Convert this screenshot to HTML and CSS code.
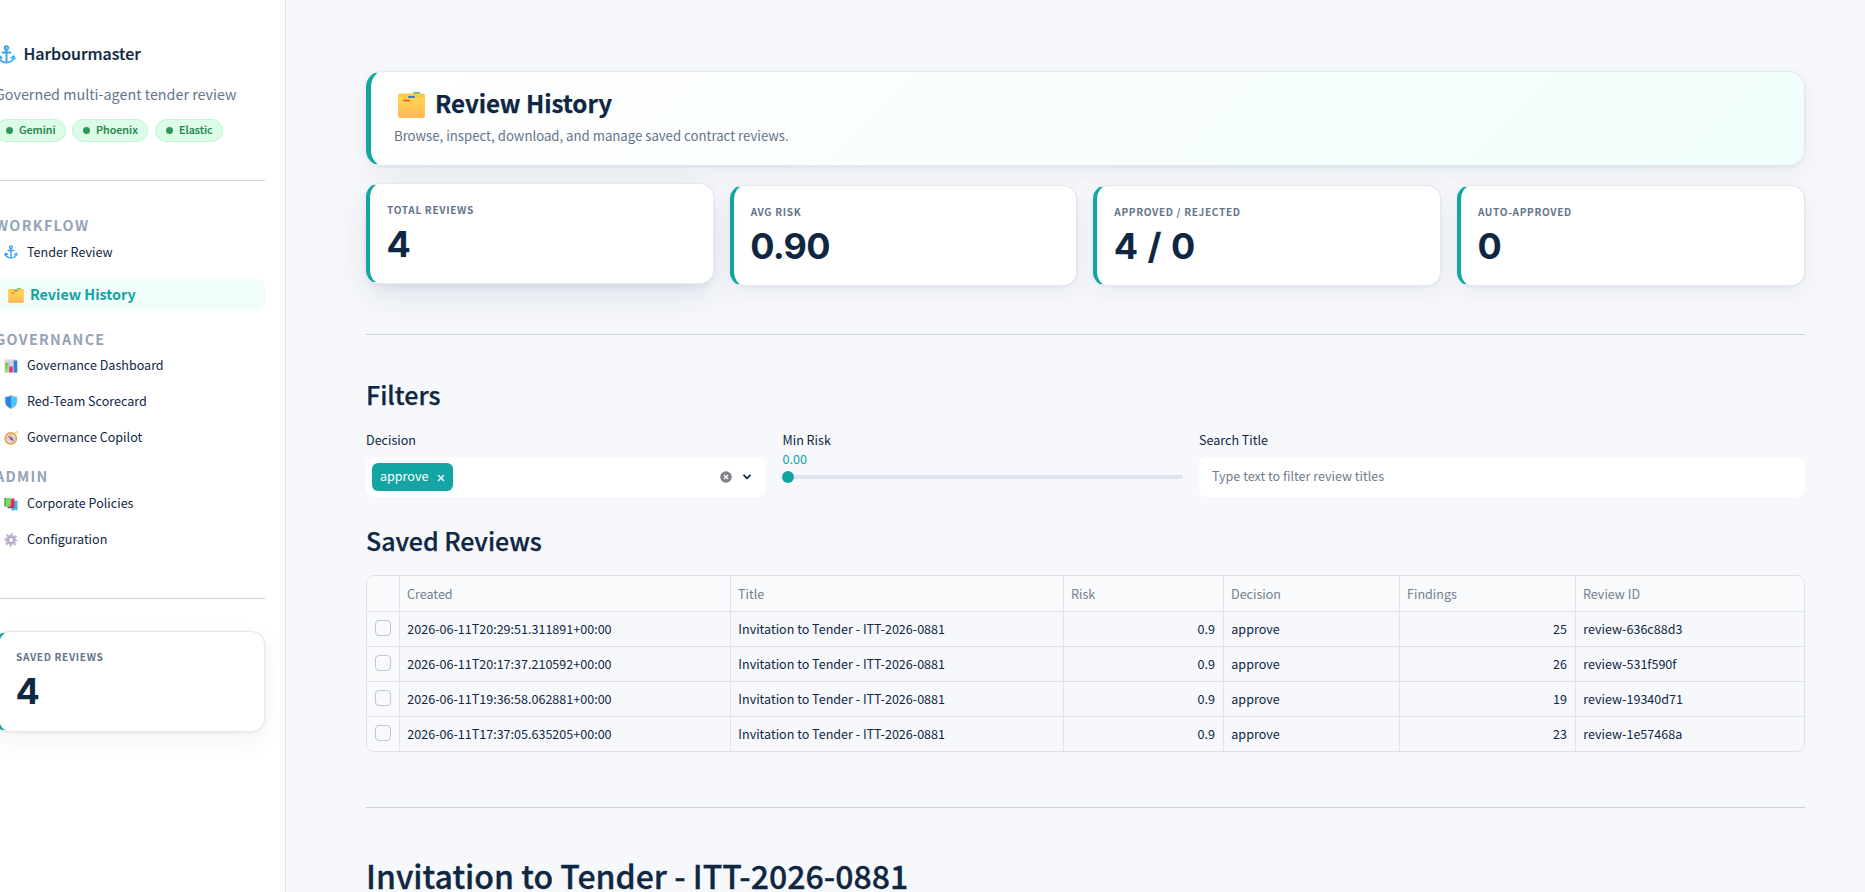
FILE: index.html
```html
<!DOCTYPE html>
<html lang="en">
<head>
<meta charset="utf-8">
<title>Harbourmaster</title>
<link rel="stylesheet" href="styles.css">
</head>
<body>
<svg class="defs" width="0" height="0" aria-hidden="true">
  <defs>
    <linearGradient id="gf" x1="0" y1="0" x2="0" y2="1"><stop offset="0" stop-color="#ffd84f"/><stop offset="1" stop-color="#ffb75c"/></linearGradient>
    <linearGradient id="ga" x1="0" y1="0" x2="1" y2="1"><stop offset="0" stop-color="#2f8fe0"/><stop offset="1" stop-color="#55bdf8"/></linearGradient>
    <linearGradient id="gg" x1="0" y1="0" x2="0" y2="1"><stop offset="0" stop-color="#5dc95a"/><stop offset="1" stop-color="#a4ea72"/></linearGradient>
  </defs>
  <symbol id="anchor" viewBox="0 0 32 32">
    <g fill="none" stroke="url(#ga)" stroke-width="3.4" stroke-linecap="round" stroke-linejoin="round">
      <circle cx="16" cy="5" r="3"/><path d="M9.500 12.500h13M16.010 8v21M3.500 21c1 5 6.500 8.500 12.500 8.500S27.500 26 28.500 21"/>
      <path d="M2 23l1.800-4 4 2.500M30 23l-1.800-4-4 2.500"/>
    </g>
  </symbol>
  <symbol id="folder" viewBox="0 0 27 26">
    <rect x="15" y="0" width="7" height="3" rx="1" fill="#40c983"/>
    <path d="M0 3.600a2 2 0 0 1 2-2h23a2 2 0 0 1 2 2V12H0z" fill="#fdc94a"/>
    <rect x="10" y="4" width="7" height="1.900" rx=".8" fill="#397fcf"/>
    <path d="M0 5.600h9l1.500 .6H27V24a2 2 0 0 1-2 2H2a2 2 0 0 1-2-2z" fill="url(#gf)"/>
    <rect x="5" y="7.800" width="7" height="1.700" rx=".8" fill="#f0473f"/>
    <path d="M0 9.400h12l1.500-.8H27" fill="none" stroke="#f8c244" stroke-width=".6"/>
  </symbol>
  <symbol id="chart" viewBox="0 0 32 32">
    <rect x="1" y="1" width="30" height="30" rx="1.500" fill="#ddd5e4"/>
    <path d="M1 8.500h30M1 16h30M1 23.500h30M11 1v30M21 1v30" stroke="#c2b7ce" stroke-width="1.200"/>
    <path d="M2.500 9h7.500v22H2.500z" fill="url(#gg)"/><path d="M12.200 17h7.500v14h-7.500z" fill="#e02f70"/><path d="M22.200 3.500H30V31h-7.800z" fill="#2584dc"/>
  </symbol>
  <symbol id="shield" viewBox="0 0 32 32">
    <path d="M16 1c-4 2.500-8 3.500-13 3.500V15c0 8 5 13 13 16z" fill="#2a83e2"/>
    <path d="M16 1c4 2.500 8 3.500 13 3.500V15c0 8-5 13-13 16z" fill="#4fc3f8"/>
    <path d="M16 1c-4 2.500-8 3.500-13 3.500V15c0 8 5 13 13 16 8-3 13-8 13-16V4.500C24 4.500 20 3.500 16 1z" fill="none" stroke="#69a9df" stroke-width="1.500"/>
  </symbol>
  <symbol id="compass" viewBox="0 0 32 32">
    <circle cx="28.500" cy="3.500" r="2.400" fill="none" stroke="#eebd46" stroke-width="1.800"/>
    <circle cx="15.500" cy="17" r="13" fill="#ded5df" stroke="#e7a13d" stroke-width="3.400"/>
    <path d="M8.500 10l10 4.500-4.500 4.500z" fill="#e64063"/><path d="M22.500 24l-8.500-5 4.500-4.500z" fill="#64596c"/>
    <path d="M15.500 6.500v3M15.500 24.500v3M5 17h3M23 17h3" stroke="#a99bb0" stroke-width="1.500"/>
  </symbol>
  <symbol id="books" viewBox="0 0 32 32">
    <path d="M17 10l14-2v22l-14 1z" fill="#41b4ec"/><path d="M15 30l13-2v3H15z" fill="#aee3f6"/>
    <path d="M12 5l12-2v20l-12 2z" fill="#d92d62"/><path d="M8 22.500l14-.5v3.500H8z" fill="#8e4163"/>
    <path d="M1 2h15v17H1z" fill="#83d65b"/><path d="M1 2h3v20H1z" fill="#45a64a"/><path d="M2 19h14v3H2z" fill="#6faf79"/>
  </symbol>
  <symbol id="gear" viewBox="0 0 32 32">
    <circle cx="16" cy="16" r="8.300" fill="none" stroke="#bdb1cd" stroke-width="6"/>
    <circle cx="16" cy="16" r="13" fill="none" stroke="#bdb1cd" stroke-width="4.600" stroke-dasharray="5.100 5.110" stroke-dashoffset="2.550"/>
    <circle cx="16" cy="16" r="6" fill="none" stroke="#9d91b0" stroke-width="1.500"/>
  </symbol>
</svg>
<div class="app">
  <aside class="sidebar">
    <div class="brand"><svg class="brand-icon"><use href="#anchor"/></svg><span>Harbourmaster</span></div>
    <p class="tagline">Governed multi-agent tender review</p>
    <div class="pills">
      <span class="pill gemini"><i></i>Gemini</span>
      <span class="pill phoenix"><i></i>Phoenix</span>
      <span class="pill elastic"><i></i>Elastic</span>
    </div>
    <hr class="rule rule-top">
    <nav>
      <h4 class="group">WORKFLOW</h4>
      <a class="link"><svg><use href="#anchor"/></svg>Tender Review</a>
      <a class="link active"><svg><use href="#folder"/></svg><span>Review History</span></a>
      <h4 class="group governance">GOVERNANCE</h4>
      <a class="link"><svg><use href="#chart"/></svg><span>Governance Dashboard</span></a>
      <a class="link"><svg><use href="#shield"/></svg><span>Red-Team Scorecard</span></a>
      <a class="link"><svg><use href="#compass"/></svg><span>Governance Copilot</span></a>
      <h4 class="group admin">ADMIN</h4>
      <a class="link"><svg><use href="#books"/></svg><span>Corporate Policies</span></a>
      <a class="link"><svg><use href="#gear"/></svg><span>Configuration</span></a>
    </nav>
    <hr class="rule rule-bottom">
    <div class="metric"><div class="metric-label">SAVED REVIEWS</div><div class="metric-value">4</div></div>
  </aside>
  <main class="main">
    <header class="hero">
      <h1 class="hero-title"><svg><use href="#folder"/></svg>Review History</h1>
      <p class="hero-sub">Browse, inspect, download, and manage saved contract reviews.</p>
    </header>
    <section class="metrics">
      <div class="metric raised"><div class="metric-label">TOTAL REVIEWS</div><div class="metric-value">4</div></div>
      <div class="metric"><div class="metric-label">AVG RISK</div><div class="metric-value">0.90</div></div>
      <div class="metric"><div class="metric-label">APPROVED / REJECTED</div><div class="metric-value">4 / 0</div></div>
      <div class="metric"><div class="metric-label">AUTO-APPROVED</div><div class="metric-value">0</div></div>
    </section>
    <hr class="rule rule-metrics">
    <h2 class="heading filters-heading">Filters</h2>
    <section class="filters">
      <div class="field">
        <label class="label">Decision</label>
        <div class="control select">
          <span class="tag">approve<svg viewBox="0 0 8 8"><path d="M1 1l6 6M7 1L1 7"/></svg></span>
          <svg class="clear" viewBox="0 0 12 12"><circle cx="6" cy="6" r="5.800"/><path d="M4 4l4 4M8 4L4 8"/></svg>
          <svg class="chevron" viewBox="0 0 10 8"><path d="M1.500 1.800L5 5.300l3.500-3.500"/></svg>
        </div>
      </div>
      <div class="field">
        <label class="label">Min Risk</label>
        <div class="slider-value">0.00</div>
        <div class="slider"><span class="thumb"></span><span class="track"></span></div>
      </div>
      <div class="field">
        <label class="label">Search Title</label>
        <div class="control search">Type text to filter review titles</div>
      </div>
    </section>
    <h2 class="heading saved-heading">Saved Reviews</h2>
    <section class="table">
      <div class="row head"><span></span><span>Created</span><span>Title</span><span>Risk</span><span>Decision</span><span>Findings</span><span>Review ID</span></div>
      <div class="row"><span class="pick"><i></i></span><span>2026-06-11T20:29:51.311891+00:00</span><span>Invitation to Tender - ITT-2026-0881</span><span class="num">0.9</span><span>approve</span><span class="num">25</span><span>review-636c88d3</span></div>
      <div class="row"><span class="pick"><i></i></span><span>2026-06-11T20:17:37.210592+00:00</span><span>Invitation to Tender - ITT-2026-0881</span><span class="num">0.9</span><span>approve</span><span class="num">26</span><span>review-531f590f</span></div>
      <div class="row"><span class="pick"><i></i></span><span>2026-06-11T19:36:58.062881+00:00</span><span>Invitation to Tender - ITT-2026-0881</span><span class="num">0.9</span><span>approve</span><span class="num">19</span><span>review-19340d71</span></div>
      <div class="row"><span class="pick"><i></i></span><span>2026-06-11T17:37:05.635205+00:00</span><span>Invitation to Tender - ITT-2026-0881</span><span class="num">0.9</span><span>approve</span><span class="num">23</span><span>review-1e57468a</span></div>
    </section>
    <hr class="rule rule-table">
    <h2 class="review-title">Invitation to Tender - ITT-2026-0881</h2>
  </main>
</div>
</body>
</html>
```
FILE: styles.css
```css
* { box-sizing: border-box; margin: 0; padding: 0; }
html, body { height: 100%; overflow: hidden; }
body {
  font-family: "Noto Sans CJK SC", "Noto Sans", sans-serif;
  font-size: 12.55px;
  color: #0f2742;
  background: #f6f8fc;
}
.defs { position: absolute; }
.app { display: flex; height: 892px; overflow: hidden; }
svg { flex: none; }

.rule { border: 0; height: 1px; background: #c9d0d9; }

/* Sidebar */
.sidebar {
  width: 291px;
  margin-left: -5px;
  height: 892px;
  flex: none;
  padding: 42px 20px 0 0;
  background: #fff;
  border-right: 1px solid #dfe5ee;
}
.brand { display: flex; align-items: center; height: 24px; font-size: 16px; line-height: 22px; font-weight: 500; -webkit-text-stroke: .2px; }
.brand-icon { width: 19px; height: 19px; margin: 0 7.500px 0 2px; }
.brand span { padding-bottom: 2px; white-space: nowrap; }
.tagline { margin-top: 16px; height: 24px; line-height: 24px; font-size: 14.34px; color: #64748b; white-space: nowrap; }
.pills { display: flex; gap: 6px; margin-top: 13px; }
.pill {
  display: flex; align-items: center; height: 23px; padding: 0 0 1px 10px;
  border: 1px solid #bbf7d0; border-radius: 12px; background: #dcfce7;
  color: #1e8449; font-size: 10.75px; font-weight: 500; line-height: 20px;
  -webkit-text-stroke: .15px;
}
.pill i { width: 7px; height: 7px; border-radius: 50%; background: #2f9559; margin: 1px 6px 0 0; }
.gemini { width: 71px; }
.phoenix { width: 76px; }
.elastic { width: 68px; margin-left: 1px; }
.rule-top { margin-top: 38px; }
.group { margin-top: 32px; height: 25px; line-height: 24px; font-size: 14.34px; font-weight: 700; letter-spacing: 1.3px; color: #94a3b8; }
.link { display: flex; align-items: center; height: 32px; padding-left: 9px; line-height: 32px; }
.link svg { width: 14px; height: 14px; margin-right: 9px; }
.link span { padding-bottom: 2px; line-height: 30px; }
.link + .link { margin-top: 4px; }
.group + .link { margin-top: -2px; }
.link + .link.active { margin-top: 11px; }
.link.active { padding-left: 13px; border-radius: 8px; background: #f0fdfa; color: #12a3a3; font-weight: 700; font-size: 14.34px; }
.link.active svg { width: 16px; height: 15px; margin-right: 6px; }
.group.governance { margin-top: 16px; }
.group.admin { margin-top: 10px; height: 26px; }
.rule-bottom { margin: 42px 0 32px; }

/* Metric cards */
.metric {
  height: 101px; padding: 17px 0 0 17px;
  border: 1px solid #e2e8f0; border-left: 4px solid #12a5a3; border-radius: 14px;
  background: #fff;
  box-shadow: 0 1px 3px rgba(15, 37, 64, .06), 0 8px 24px rgba(15, 37, 64, .06);
}
.metric-label { height: 16px; line-height: 16px; font-size: 10.1px; font-weight: 700; letter-spacing: .66px; color: #64748b; }
.metric-value { margin: 4px 0 0 -.5px; height: 44px; line-height: 44px; font-family: Inter, sans-serif; font-size: 36px; font-weight: 700; letter-spacing: -.7px; word-spacing: 2.4px; }
.metrics { display: grid; grid-template-columns: repeat(4, 1fr); gap: 16px; margin-top: 19px; }
.metrics .metric { padding-top: 18px; }
.raised { transform: translateY(-2px); box-shadow: 0 4px 6px rgba(15, 37, 64, .05), 0 12px 32px rgba(15, 37, 64, .10); }

/* Main */
.main { flex: 1; min-width: 0; padding: 71px 60.500px 0 80px; }
.hero {
  height: 95px; padding: 14px 0 0 23px;
  border: 1px solid #e2e8f0; border-left: 5px solid #12a5a3; border-radius: 16px;
  background: linear-gradient(135deg, #fff 0%, #f0fdfa 100%);
  box-shadow: 0 1px 3px rgba(15, 37, 64, .08), 0 8px 24px rgba(15, 37, 64, .06);
}
.hero-title { display: flex; align-items: center; height: 34px; line-height: 34px; font-size: 24.1px; font-weight: 700; letter-spacing: -.06px; -webkit-text-stroke: .25px; }
.hero-title svg { width: 27px; height: 26px; margin: 3px 10px 0 4px; }
.hero-sub { margin-top: 5px; height: 22px; line-height: 22px; font-size: 13.18px; color: #64748b; }
.rule-metrics { margin-top: 48px; }
.heading { height: 34px; line-height: 34px; font-size: 25px; font-weight: 500; -webkit-text-stroke: .25px; }
.filters-heading { margin-top: 42px; }

.filters { display: grid; grid-template-columns: 400px 400px 1fr; gap: 16.500px; margin-top: 19px; height: 67px; }
.label { display: block; height: 20px; line-height: 20px; }
.control { display: flex; align-items: center; height: 40px; margin-top: 7px; border-radius: 8px; background: #fff; }
.select { padding: 0 14px 0 6px; }
.tag { display: flex; align-items: center; width: 81px; height: 28px; padding: 0 8px 2px 8px; line-height: 24px; justify-content: space-between; border-radius: 6px; background: #12a5a3; color: #fff; }
.tag svg { width: 8px; height: 8px; margin-top: 3px; }
.tag path, .clear path { fill: none; stroke: #fff; stroke-width: 1.4; }
.clear { width: 12px; height: 12px; margin-left: auto; margin-bottom: 1px; }
.clear circle { fill: #808289; }
.chevron { width: 10px; height: 8px; margin-left: 10px; }
.chevron path { fill: none; stroke: #0f2540; stroke-width: 1.8; }
.search { padding: 0 0 2px 13px; line-height: 20px; color: #6f7c8d; }
.slider-value { height: 17px; padding-top: 1px; line-height: 16px; color: #12a3a3; }
.slider { display: flex; align-items: center; height: 12px; margin-top: 4px; }
.thumb { width: 12px; height: 12px; margin-left: -1px; border-radius: 50%; background: #12a5a3; }
.track { flex: 1; height: 4px; border-radius: 0 2px 2px 0; background: #dde6ef; }
.saved-heading { margin-top: 26px; letter-spacing: -.06px; }

.table { margin-top: 18px; border: 1px solid #dfe2e8; border-radius: 8px; overflow: hidden; }
.row { display: grid; grid-template-columns: 33px 331px 333px 160px 176px 176px 1fr; height: 35px; border-top: 1px solid #dfe2e8; }
.row.head { height: 35px; border-top: 0; background: #f8fafb; color: #737f8f; }
.row > span { padding: 0 8px 0 7.300px; line-height: 34px; border-right: 1px solid #dfe2e8; white-space: nowrap; }
.row.head > span { padding-top: 1px; padding-left: 7px; }
.row > span:last-child { border-right: 0; }
.row > .num { text-align: right; }
.row > .pick { padding: 8px 0 0 8px; background: #f8fafb; }
.pick i { display: block; width: 16px; height: 16px; border: 1px solid #c1c6cf; border-radius: 4px; }
.rule-table { margin-top: 55px; }
.review-title { margin-top: 46px; height: 42px; line-height: 42px; font-size: 32.05px; font-weight: 500; -webkit-text-stroke: .3px; white-space: nowrap; }
```
